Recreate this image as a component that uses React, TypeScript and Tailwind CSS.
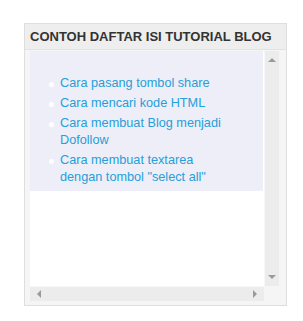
const POSTS = [
  'Cara pasang tombol share',
  'Cara mencari kode HTML',
  'Cara membuat Blog menjadi Dofollow',
  'Cara membuat textarea dengan tombol "select all"',
]

function Arrow({ dir }: { dir: 'up' | 'down' | 'left' | 'right' }) {
  const cls = {
    up: 'border-x-[4px] border-b-[4px] border-x-transparent border-b-[#9a9a9a]',
    down: 'border-x-[4px] border-t-[4px] border-x-transparent border-t-[#9a9a9a]',
    left: 'border-y-[4px] border-r-[4px] border-y-transparent border-r-[#9a9a9a]',
    right: 'border-y-[4px] border-l-[4px] border-y-transparent border-l-[#9a9a9a]',
  }[dir]
  return <span className={`block h-0 w-0 ${cls}`} />
}

export default function App() {
  return (
    <div className="bg-white w-[303px] h-[321px] pt-[23px] pl-[24px] font-['Liberation_Sans',Arial,sans-serif]">
      <div className="w-[263px] border border-[#dedede] bg-[#f5f5f5]">
        <h2 className="h-[26px] flex items-center px-[5px] bg-[#eeeeee] border-b border-[#e2e2e2] text-[13px] font-bold text-[#333333] leading-none">
          CONTOH DAFTAR ISI TUTORIAL BLOG
        </h2>
        <div className="pt-[1px] pl-[5px] pb-[4px]">
          <div className="w-[249px] h-[250px] grid grid-cols-[234px_15px] grid-rows-[235px_15px] bg-white">
            <div className="pr-[1px]">
              <ul className="bg-[#eeeef9] pt-[24px] pb-[5px] pl-[19px] pr-[8px] text-[12.7px] leading-[17px] text-[#24a0d8]">
                {POSTS.map((p) => (
                  <li key={p} className="flex gap-[6px] mb-[3px] last:mb-0">
                    <span className="mt-[7px] h-[5px] w-[5px] shrink-0 rounded-full bg-white" />
                    <a href="#" className="w-[168px]">{p}</a>
                  </li>
                ))}
              </ul>
            </div>
            <div className="flex flex-col items-center justify-between bg-[#ececec] border-l border-[#f7f7f7] py-[7px]">
              <Arrow dir="up" />
              <Arrow dir="down" />
            </div>
            <div className="flex items-center justify-between bg-[#ececec] border-t border-[#f7f7f7] px-[7px]">
              <Arrow dir="left" />
              <Arrow dir="right" />
            </div>
            <div className="bg-[#f5f5f5]" />
          </div>
        </div>
      </div>
    </div>
  )
}
